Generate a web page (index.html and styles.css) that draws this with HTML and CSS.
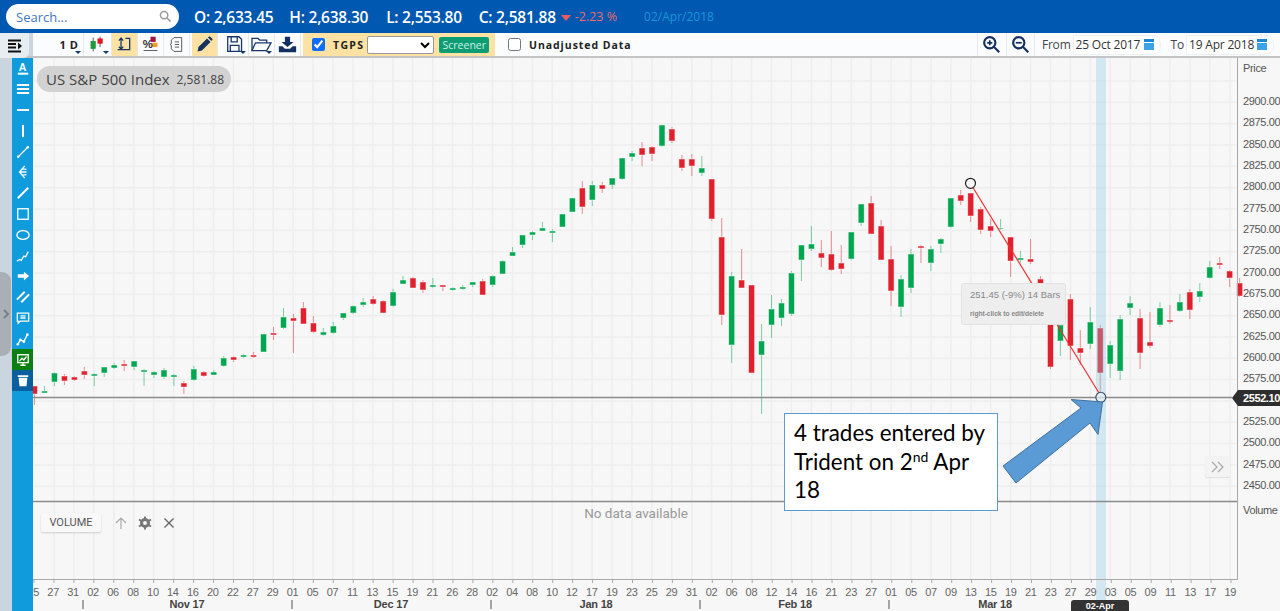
FILE: index.html
```html
<!DOCTYPE html>
<html lang="en">
  <head>
    <meta charset="UTF-8" />
    <title>US S&amp;P 500 Index</title>
    <link rel="stylesheet" href="styles.css">
  </head>
  <body>
    <header class="quote-bar">
      <div class="search">
        <span>Search...</span>
        <svg class="search-icon" viewBox="0 0 14 14"><circle cx="5.5" cy="5.5" r="4"/><path d="M8.6 8.6 12.5 12.5"/></svg>
      </div>
      <span class="ohlc ohlc-o">O: 2,633.45</span>
      <span class="ohlc ohlc-h">H: 2,638.30</span>
      <span class="ohlc ohlc-l">L: 2,553.80</span>
      <span class="ohlc ohlc-c">C: 2,581.88</span>
      <span class="change"><i class="change-arrow"></i>-2.23 %</span>
      <span class="quote-date">02/Apr/2018</span>
    </header>

    <div class="toolbar">
      <div class="tab-holder">
        <div class="tab">
          <svg class="ico-menu" viewBox="0 0 14 14"><path d="M0 1.5H13M0 5H8M0 8.5H8M0 12.5H13"/><path class="solid" d="M10 3.5 14 7 10 10.5Z"/></svg>
        </div>
      </div>
      <div class="tools">
        <div class="cell cell-period">1 D<i class="caret"></i></div>
        <div class="cell cell-chart">
          <svg class="ico" viewBox="0 0 22 22"><path class="thin" d="M6 3V19M14 2V14"/><rect x="3" y="7" width="6" height="9" fill="#1d9a3c"/><rect x="11" y="4" width="6" height="6" fill="#e0141c"/></svg>
          <i class="caret"></i>
        </div>
        <div class="cell cell-on">
          <svg class="ico" viewBox="0 0 22 22"><path class="line" d="M7 4V16M4.5 6.5 7 3.5 9.5 6.5M4.5 13.5 7 16.5 9.5 13.5"/><path class="line" d="M12 4H17V17H3"/></svg>
        </div>
        <div class="cell">
          <svg class="ico" viewBox="0 0 22 22"><rect x="11" y="2" width="6" height="6" fill="#a3143c"/><rect x="13" y="9" width="6" height="5" fill="#f59a23"/><text class="pct" x="2" y="15">%</text><path class="thin" d="M3 18H19"/></svg>
        </div>
        <div class="cell">
          <svg class="ico" viewBox="0 0 22 22"><path class="thin" d="M8 3H17V19H8L5 16V12L3.5 11 5 10V6Z"/><path class="thin" d="M9 8H14M9 11H14M9 14H14"/></svg>
        </div>
        <div class="cell cell-on cell-gap">
          <svg class="ico" viewBox="0 0 22 22"><path class="solid" d="M3 19 4 14 14 4 18 8 8 18Z"/><path class="solid" d="M15 3 17 1.5 20.5 5 19 7Z"/></svg>
        </div>
        <div class="cell cell-gap">
          <svg class="ico" viewBox="0 0 22 22"><path class="line" d="M2 2H15L18 5V19H2Z"/><path class="line" d="M6 2V8H13V2M5 19V12H15V19"/></svg>
          <i class="caret"></i>
        </div>
        <div class="cell">
          <svg class="ico ico-wide" viewBox="0 0 26 22"><path class="line" d="M2 18V4H9L11 6H19V9"/><path class="line" d="M2 18 6 9H24L19 18Z"/></svg>
          <i class="caret"></i>
        </div>
        <div class="cell">
          <svg class="ico" viewBox="0 0 22 22"><path class="solid" d="M8 2H14V8H18L11 14 4 8H8Z"/><path class="solid" d="M1 13H5L8 16H14L17 13H21V20H1Z"/></svg>
        </div>
        <div class="tgps">
          <input type="checkbox" checked />
          <b>TGPS</b>
          <select><option></option></select>
          <button class="screener">Screener</button>
        </div>
        <label class="unadjusted"><input type="checkbox" /><b>Unadjusted Data</b></label>
      </div>
      <div class="range">
        <div class="cell cell-zoom">
          <svg class="ico" viewBox="0 0 22 22"><circle class="line-thick" cx="9" cy="9" r="6.5"/><path class="line-thick" d="M14 14 20 20"/><path class="solid" d="M6 8H8V6H10V8H12V10H10V12H8V10H6Z"/></svg>
        </div>
        <div class="cell cell-zoom">
          <svg class="ico" viewBox="0 0 22 22"><circle class="line-thick" cx="9" cy="9" r="6.5"/><path class="line-thick" d="M14 14 20 20"/><path class="solid" d="M5.5 8H12.5V10H5.5Z"/></svg>
        </div>
        <span class="range-label range-from">From</span>
        <div class="date-input">25 Oct 2017<i class="cal"></i></div>
        <span class="range-label range-to">To</span>
        <div class="date-input">19 Apr 2018<i class="cal"></i></div>
      </div>
    </div>

    <div class="workspace">
      <div class="gutter"><div class="handle">
        <svg viewBox="0 0 6 10"><path d="M1 1 5 5 1 9"/></svg>
      </div></div>
      <nav class="drawbar">
        <button><svg viewBox="0 0 16 16"><text class="glyph" x="3" y="11">A</text><path class="thick" d="M2 14.5H14"/></svg></button>
        <button><svg viewBox="0 0 16 16"><path class="thick" d="M1 3.5H15M1 8H15M1 12.5H15"/></svg></button>
        <button><svg viewBox="0 0 16 16"><path class="thick" d="M1 8H15"/></svg></button>
        <button><svg viewBox="0 0 16 16"><path class="thick" d="M8 1V15"/></svg></button>
        <button><svg viewBox="0 0 16 16"><path d="M2 14 14 2"/><circle class="dot" cx="2.5" cy="13.5" r="1.4"/><circle class="dot" cx="13.5" cy="2.5" r="1.4"/></svg></button>
        <button><svg viewBox="0 0 16 16"><path d="M10 1 4 8 10 15M4 8H12M7 4.5 12 5M7 11.5 12 11"/></svg></button>
        <button><svg viewBox="0 0 16 16"><path class="thick" d="M2 14 14 2"/></svg></button>
        <button><svg viewBox="0 0 16 16"><rect x="2" y="2" width="12" height="12"/></svg></button>
        <button><svg viewBox="0 0 16 16"><ellipse cx="8" cy="8" rx="7" ry="5"/></svg></button>
        <button><svg viewBox="0 0 16 16"><path d="M1 14 4 12 6 13 9 8 11 9 14 3"/></svg></button>
        <button><svg viewBox="0 0 16 16"><path class="fill" d="M2 6H9V3L15 8 9 13V10H2Z"/></svg></button>
        <button><svg viewBox="0 0 16 16"><path class="thick" d="M1 11 10 2M6 14 15 5"/></svg></button>
        <button><svg viewBox="0 0 16 16"><path d="M1.5 2.5H14.5V11.5H5L2.5 14V11.5H1.5Z"/><path d="M5 5.5H11M5 8H11"/></svg></button>
        <button><svg viewBox="0 0 16 16"><path d="M2 14 5 9 9 11 13 3"/><circle class="dot" cx="5" cy="9" r="1.5"/><circle class="dot" cx="9" cy="11" r="1.5"/><circle class="dot" cx="13" cy="3" r="1.5"/><circle class="dot" cx="2" cy="14" r="1.5"/></svg></button>
        <button class="draw-on"><svg viewBox="0 0 16 16"><rect x="2" y="2" width="12" height="9"/><path d="M4 9 7 6 9 8 12 4M8 11V14M5 14H11"/></svg></button>
        <button class="draw-trash"><svg viewBox="0 0 16 16"><path class="fill" d="M2 2.5H14V4.5H2ZM3 5.5H13L12 15H4Z"/></svg></button>
      </nav>

      <section class="chart">
        <svg id="plot" viewBox="33 58 1247 553"></svg>

        <div class="legend"><span>US S&amp;P 500 Index</span><small>2,581.88</small></div>

        <div class="measure">
          <p class="measure-main">251.45 (-9%) 14 Bars</p>
          <p class="measure-hint">right-click to edit/delete</p>
        </div>

        <div class="price-tag">2552.10</div>
        <div class="date-tag">02-Apr</div>

        <button class="skip">
          <svg viewBox="0 0 14 12"><path d="M1 1 6 6 1 11M7 1 12 6 7 11"/></svg>
        </button>

        <div class="no-data">No data available</div>

        <div class="volume-bar">
          <button class="volume-btn">VOLUME</button>
          <svg class="vol-ico" viewBox="0 0 14 14"><path class="up" d="M7 13V2M2 7 7 2 12 7"/></svg>
          <svg class="vol-ico" viewBox="0 0 14 14"><circle class="gear" cx="7" cy="7" r="3.5"/><path class="gear-teeth" d="M7 0.5V3M7 11V13.5M1 3.5 3.2 4.8M10.8 9.2 13 10.5M1 10.5 3.2 9.2M10.8 4.8 13 3.5"/></svg>
          <svg class="vol-ico" viewBox="0 0 14 14"><path class="close" d="M2.5 2.5 11.5 11.5M11.5 2.5 2.5 11.5"/></svg>
        </div>

        <div class="callout">4 trades entered by Trident on 2<sup>nd</sup> Apr 18</div>
      </section>
    </div>

    <script src="script.js"></script>
  </body>
</html>
```

FILE: styles.css
```css
* {
  box-sizing: border-box;
}

html,
body {
  margin: 0;
  height: 611px;
  overflow: hidden;
  background: #f7f7f7;
  font-family: "Open Sans", "Liberation Sans", sans-serif;
}

button {
  font-family: inherit;
  cursor: pointer;
}

/* top blue bar */
.quote-bar {
  height: 33px;
  background: #0058b0;
  display: flex;
  align-items: center;
  padding-left: 6px;
  color: #fff;
}

.search {
  width: 173px;
  height: 25px;
  background: #fff;
  border-radius: 13px;
  display: flex;
  align-items: center;
  justify-content: space-between;
  padding: 0 7px 0 10px;
  font-size: 13px;
  color: #3f78bd;
}

.search-icon {
  width: 13px;
  height: 13px;
  fill: none;
  stroke: #9a9a9a;
  stroke-width: 1.6;
}

.ohlc {
  font-size: 15.5px;
  font-weight: 600;
  letter-spacing: -0.25px;
  white-space: nowrap;
}

.ohlc-o { margin-left: 15px; }
.ohlc-h { margin-left: 16px; }
.ohlc-l { margin-left: 18px; }
.ohlc-c { margin-left: 17px; }

.change {
  margin-left: 5px;
  font-size: 12.5px;
  color: #ee6a6e;
  white-space: nowrap;
}

.change-arrow {
  display: inline-block;
  width: 0;
  height: 0;
  margin-right: 4px;
  border-left: 5px solid transparent;
  border-right: 5px solid transparent;
  border-top: 6px solid #ee5a5e;
}

.quote-date {
  margin-left: 27px;
  font-size: 12px;
  color: #1a96d8;
}

/* toolbar */
.toolbar {
  height: 25px;
  display: flex;
  background: #fbfcfe;
  border-bottom: 2px solid #c4c4c4;
}

.tab-holder {
  width: 33px;
  background: #cbd5df;
}

.tab {
  width: 29px;
  height: 25px;
  background: #e8edf2;
  border-bottom-right-radius: 6px;
  display: flex;
  align-items: center;
  padding-left: 8px;
}

.ico-menu {
  width: 14px;
  height: 14px;
  fill: none;
  stroke: #111;
  stroke-width: 2;
}

.ico-menu .solid {
  fill: #111;
  stroke: none;
}

.tools {
  flex: 1;
  display: flex;
  padding-left: 22px;
}

.cell {
  width: 26px;
  height: 23px;
  position: relative;
  display: flex;
  align-items: center;
  justify-content: center;
  border-right: 1px solid #e8e8e8;
}

.cell-period {
  width: 29px;
  font-size: 11px;
  font-weight: 700;
  color: #222;
  letter-spacing: 0.5px;
  padding-bottom: 1px;
}

.cell-chart {
  width: 28px;
}

.cell-on {
  background: #fde2a3;
}

.cell-gap {
  margin-left: 2px;
}

.cell-gap + .cell-gap {
  margin-left: 5px;
}

.caret {
  position: absolute;
  right: 2px;
  bottom: 2px;
  width: 0;
  height: 0;
  border-left: 3px solid transparent;
  border-right: 3px solid transparent;
  border-top: 3px solid #17376b;
}

.ico {
  width: 19px;
  height: 19px;
}

.ico-wide {
  width: 23px;
}

.ico .line {
  fill: none;
  stroke: #17376b;
  stroke-width: 1.5;
}

.ico .line-thick {
  fill: none;
  stroke: #14305f;
  stroke-width: 2.5;
}

.ico .thin {
  fill: none;
  stroke: #444;
  stroke-width: 1;
}

.ico .solid {
  fill: #14305f;
}

.ico .pct {
  font: 700 13px "Liberation Sans", sans-serif;
  fill: #333;
}

.tgps {
  width: 192px;
  margin-left: 2px;
  background: #fde2a3;
  display: flex;
  align-items: center;
  padding-left: 9px;
}

.tgps input {
  width: 13px;
  height: 13px;
  margin: 0;
  accent-color: #0d6efd;
}

.tgps b {
  margin-left: 8px;
  font: 700 10.5px "Open Sans", sans-serif;
  letter-spacing: 1.3px;
  color: #222;
}

.tgps select {
  width: 67px;
  height: 18px;
  margin-left: 3px;
  background: #fff;
  border: 1px solid #999;
  border-radius: 2px;
}

.screener {
  width: 50px;
  height: 16px;
  margin-left: 5px;
  padding: 0;
  background: #0d9d75;
  border: 0;
  border-radius: 2px;
  font-size: 10.5px;
  color: #cdeee2;
}

.unadjusted {
  margin-left: 13px;
  display: flex;
  align-items: center;
}

.unadjusted input {
  width: 13px;
  height: 13px;
  margin: 0;
}

.unadjusted b {
  margin-left: 8px;
  font: 700 10.5px "Open Sans", sans-serif;
  letter-spacing: 0.95px;
  color: #222;
}

.range {
  display: flex;
  align-items: center;
}

.cell-zoom {
  width: 29px;
  border-left: 1px solid #e8e8e8;
  border-right: 0;
}

.cell-zoom + .cell-zoom {
  border-right: 1px solid #e8e8e8;
}

.range-label {
  font-size: 12px;
  letter-spacing: -0.2px;
  color: #444;
}

.range-from {
  margin-left: 7px;
}

.range-to {
  margin-left: 10px;
}

.date-input {
  height: 20px;
  width: 88px;
  margin-left: 2px;
  padding-left: 2px;
  display: flex;
  align-items: center;
  justify-content: space-between;
  font-size: 12px;
  letter-spacing: -0.2px;
  color: #333;
  background: #fff;
  border: 1px solid #eef1f4;
  border-radius: 0 9px 9px 0;
}

.date-input:last-child {
  margin-right: 6px;
}

.cal {
  width: 10px;
  height: 11px;
  margin-right: 6px;
  background: linear-gradient(#1e88d8 3px, #fff 3px, #fff 4px, #3aa4e6 4px);
}

/* main area */
.workspace {
  display: flex;
  height: 553px;
}

.gutter {
  width: 12px;
  background: #cbd5df;
  position: relative;
}

.handle {
  position: absolute;
  left: 0;
  top: 214px;
  width: 11px;
  height: 84px;
  background: #a9afb5;
  border-radius: 0 9px 9px 0;
  display: flex;
  align-items: center;
  justify-content: center;
}

.handle svg {
  width: 6px;
  height: 10px;
  fill: none;
  stroke: #79818a;
  stroke-width: 2;
}

.drawbar {
  width: 21px;
  background: #0f9bdc;
  display: flex;
  flex-direction: column;
}

.drawbar button {
  height: 20.8px;
  padding: 0;
  border: 0;
  background: none;
  display: flex;
  align-items: center;
  justify-content: center;
}

.drawbar svg {
  width: 14px;
  height: 14px;
  fill: none;
  stroke: #fff;
  stroke-width: 1.5;
}

.drawbar .thick {
  stroke-width: 2.3;
}

.drawbar .dot,
.drawbar .fill {
  fill: #fff;
  stroke: none;
}

.drawbar .glyph {
  font: 700 12px "Liberation Sans", sans-serif;
  fill: #fff;
  stroke: none;
}

.draw-on {
  background: #0b7f0f !important;
}

.draw-trash {
  background: #0a5f9e !important;
}

.chart {
  flex: 1;
  position: relative;
  overflow: hidden;
  background: #f7f7f7;
}

#plot {
  display: block;
  width: 1247px;
  height: 553px;
}

.grid-line {
  stroke: #eeeeee;
  stroke-width: 1.5;
}

.axis-line {
  stroke: #a8a8a8;
  stroke-width: 1;
}

.rule {
  stroke: #8a8a8a;
  stroke-width: 1.5;
}

.band {
  fill: #8cc8e6;
  fill-opacity: 0.34;
}

.trend {
  stroke: #f03030;
  stroke-width: 1.2;
}

.handle-top {
  fill: #f7f7f7;
  stroke: #222;
  stroke-width: 1.2;
}

.handle-end {
  fill: #e8f2f6;
  fill-opacity: 0.7;
  stroke: #34495e;
  stroke-width: 1.1;
}

.wick-up { stroke: #00a650; stroke-opacity: 0.5; }
.wick-down { stroke: #e0202c; stroke-opacity: 0.5; }
.body-up { fill: #00a650; stroke: #fff; stroke-opacity: 0.6; stroke-width: 0.8; }
.body-down { fill: #e0202c; stroke: #fff; stroke-opacity: 0.6; stroke-width: 0.8; }

.axis-text {
  font: 11px "Liberation Sans", sans-serif;
  fill: #555;
  letter-spacing: -0.35px;
}

.date-text {
  font: 11px "Liberation Sans", sans-serif;
  fill: #666;
  text-anchor: middle;
  letter-spacing: -0.3px;
}

.month-text {
  font: 700 11px "Liberation Sans", sans-serif;
  fill: #444;
  text-anchor: middle;
  letter-spacing: -0.2px;
}

.arrow-shape {
  fill: #5b9bd5;
  stroke: #41719c;
  stroke-width: 1;
}

.legend {
  position: absolute;
  left: 4px;
  top: 8px;
  width: 194px;
  height: 26px;
  background: #d2d2d2;
  border-radius: 13px;
  display: flex;
  align-items: center;
  padding-left: 9px;
  color: #444;
  font-size: 15px;
  white-space: nowrap;
}

.legend small {
  margin-left: 7px;
  font-size: 12px;
}

.measure {
  position: absolute;
  left: 928px;
  top: 225px;
  width: 105px;
  height: 42px;
  background: #eee;
  border: 1px solid #e2e2e2;
  border-radius: 3px;
  padding: 5px 0 0 8px;
  font-family: "Liberation Sans", sans-serif;
  color: #888;
  white-space: nowrap;
}

.measure p {
  margin: 0;
}

.measure-main {
  font-size: 9.5px;
}

.measure .measure-hint {
  margin-top: 10px;
  font-size: 6.6px;
  font-weight: 700;
}

.price-tag {
  position: absolute;
  left: 1205px;
  top: 332px;
  width: 42px;
  height: 16px;
  background: #2e2e2e;
  color: #fff;
  font: 700 11px/16px "Liberation Sans", sans-serif;
  letter-spacing: -0.4px;
  padding-left: 5px;
}

.price-tag::before {
  content: "";
  position: absolute;
  left: -6px;
  top: 0;
  border-top: 8px solid transparent;
  border-bottom: 8px solid transparent;
  border-right: 6px solid #2e2e2e;
}

.date-tag {
  position: absolute;
  left: 1038px;
  top: 542px;
  width: 58px;
  height: 11px;
  background: #333;
  border-radius: 3px 3px 0 0;
  color: #fff;
  font: 700 9px/12px "Liberation Sans", sans-serif;
  text-align: center;
}

.skip {
  position: absolute;
  left: 1172px;
  top: 398px;
  width: 25px;
  height: 21px;
  padding: 0;
  background: #f3f3f3;
  border: 0;
  border-radius: 2px;
  box-shadow: 0 1px 1px #ddd;
  display: flex;
  align-items: center;
  justify-content: center;
}

.skip svg {
  width: 14px;
  height: 12px;
  fill: none;
  stroke: #aaa;
  stroke-width: 1.2;
}

.no-data {
  position: absolute;
  left: 503px;
  top: 447px;
  width: 200px;
  text-align: center;
  font: 13.5px Roboto, sans-serif;
  color: #999;
}

.volume-bar {
  position: absolute;
  left: 8px;
  top: 455px;
  display: flex;
  align-items: center;
  gap: 9px;
}

.volume-btn {
  width: 60px;
  height: 19px;
  padding: 0;
  margin-right: 4px;
  background: #f8f8f8;
  border: 0;
  border-radius: 2px;
  box-shadow: 0 1px 2px #ccc;
  font: 11px Roboto, sans-serif;
  color: #555;
}

.vol-ico {
  width: 14px;
  height: 14px;
  margin-right: 1px;
  fill: none;
}

.vol-ico .up {
  stroke: #aaa;
  stroke-width: 1.2;
}

.vol-ico .gear {
  stroke: #777;
  stroke-width: 3;
}

.vol-ico .gear-teeth {
  stroke: #777;
  stroke-width: 2;
}

.vol-ico .close {
  stroke: #666;
  stroke-width: 1.4;
}

.callout {
  position: absolute;
  left: 751px;
  top: 355px;
  width: 214px;
  height: 98px;
  background: #fff;
  border: 1px solid #5b9bd5;
  padding: 5px 9px 0 9px;
  font: 22.4px/28.5px Lato, sans-serif;
  color: #000;
}

.callout sup {
  font-size: 14px;
  line-height: 0;
}
```

FILE: script.js
```js
// each candle: direction, wick top, body top, body bottom, wick bottom (page y)
const candles = [
  ["d",386,386,394,405],["u",386,391,393,393],["u",372,373,382,386],["d",374,376,381,385],
  ["d",376,377,380,381],["d",367,371,375,379],["u",373,374,376,386],["u",367,367,373,377],
  ["u",363,365,368,369],["d",360,364,366,371],["u",361,361,367,370],["u",369,370,372,386],
  ["u",371,372,375,378],["u",368,370,377,379],["u",374,375,377,386],["d",381,383,387,394],
  ["u",366,369,380,381],["d",371,372,376,377],["u",370,372,375,375],["u",356,358,366,367],
  ["d",356,357,360,362],["u",354,355,357,358],["d",352,355,357,358],["u",334,334,352,352],
  ["d",327,333,335,340],["u",308,317,328,329],["d",314,318,321,353],["d",302,308,324,324],
  ["d",316,323,332,333],["u",328,332,335,336],["u",322,326,333,334],["u",313,313,318,320],
  ["u",305,306,313,314],["u",298,302,305,307],["d",296,299,304,305],["d",300,301,313,313],
  ["u",289,292,306,307],["u",276,280,284,284],["d",277,278,288,288],["d",280,282,290,293],
  ["u",278,285,287,288],["d",285,285,287,291],["u",287,288,290,291],["u",285,287,289,290],
  ["u",282,282,285,287],["d",279,281,295,295],["u",275,276,285,287],["u",260,261,274,274],
  ["u",247,252,256,256],["u",235,235,245,248],["u",231,232,235,240],["u",222,228,231,231],
  ["u",229,231,233,242],["u",214,214,227,227],["u",198,198,212,212],["d",181,188,207,214],
  ["u",181,185,200,206],["d",182,185,189,193],["u",178,178,185,189],["u",158,158,179,180],
  ["u",151,153,157,161],["d",142,148,155,166],["d",146,147,154,161],["u",125,125,146,147],
  ["d",127,129,141,143],["d",155,159,168,171],["d",154,159,166,176],["u",156,168,173,176],
  ["d",179,179,219,221],["d",218,237,315,325],["u",272,276,345,363],["d",249,280,288,288],
  ["d",285,285,373,373],["u",324,341,355,414],["u",295,309,325,338],["u",299,303,318,326],
  ["u",271,273,314,316],["u",245,245,260,281],["u",226,244,249,251],["d",240,253,258,267],
  ["d",231,254,270,271],["d",245,263,269,274],["u",232,232,259,260],["u",204,204,223,226],
  ["d",196,203,234,234],["d",220,226,260,260],["d",246,259,291,306],["u",275,279,307,317],
  ["u",249,254,288,293],["d",245,246,248,263],["u",246,249,263,271],["u",238,239,244,253],
  ["u",198,198,227,228],["d",190,195,201,205],["d",193,193,216,222],["d",207,209,230,234],
  ["d",219,226,231,237],["u",219,228,229,230],["d",237,237,261,277],["u",251,258,260,263],
  ["d",239,259,262,264],["d",276,279,290,292],["d",300,316,367,369],["u",310,325,341,356],
  ["d",294,299,346,360],["d",330,348,353,365],["u",307,322,344,349],["d",325,328,373,392],
  ["u",341,345,364,378],["u",315,319,371,380],["u",296,303,308,315],["d",309,318,353,369],
  ["d",312,342,346,348],["u",302,308,325,327],["d",305,320,322,324],["u",294,302,311,312],
  ["d",289,292,310,319],["u",283,291,297,302],["u",261,267,278,279],["d",257,263,265,269],
  ["d",270,271,278,287],["d",278,283,296,297]
];

const dates = ["25","27","31","02","06","08","10","14","16","20","22","27","29","01","05","07",
  "11","13","15","19","21","26","28","02","04","08","10","12","17","19","23","25","29","31","02",
  "06","08","12","14","16","21","23","27","01","05","07","09","13","15","19","21","23","27","29",
  "03","05","09","11","13","17","19"];

const months = [["Nov 17", 187], ["Dec 17", 391], ["Jan 18", 596], ["Feb 18", 795], ["Mar 18", 995]];
const monthTicks = [83, 292, 491, 700, 889];

const plot = document.querySelector("#plot");
const ns = "http://www.w3.org/2000/svg";

function add(tag, attrs, text) {
  const el = document.createElementNS(ns, tag);
  Object.keys(attrs).forEach((key) => el.setAttribute(key, attrs[key]));
  if (text) el.textContent = text;
  plot.appendChild(el);
  return el;
}

// grid
for (let y = 81; y < 500; y += 21.33) {
  add("line", { class: "grid-line", x1: 33, x2: 1237, y1: y, y2: y });
}
for (let x = 54; x < 1237; x += 19.93) {
  add("line", { class: "grid-line", x1: x, x2: x, y1: 58, y2: 579 });
}

// candles
candles.forEach((c, i) => {
  const x = 34.5 + 9.96 * i;
  const up = c[0] == "u";
  add("line", { class: up ? "wick-up" : "wick-down", x1: x, x2: x, y1: c[1], y2: c[4] });
  add("rect", { class: up ? "body-up" : "body-down", x: x - 3, y: c[2], width: 6, height: c[3] - c[2] });
});

// selected day and the lines on top of it
add("rect", { class: "band", x: 1096, y: 58, width: 10, height: 553 });
add("line", { class: "rule", x1: 33, x2: 1232, y1: 397.5, y2: 397.5 });
add("line", { class: "rule", x1: 33, x2: 1238, y1: 501.5, y2: 501.5 });
add("line", { class: "trend", x1: 972, y1: 186, x2: 1099, y2: 393 });
add("circle", { class: "handle-top", cx: 970.5, cy: 183.3, r: 5 });
add("circle", { class: "handle-end", cx: 1100.8, cy: 397.3, r: 5 });
add("polygon", { class: "arrow-shape", points: "1003,466 1081,408 1071,399.5 1102.5,402 1098,434.5 1090,423 1016,483" });

// price axis, the 2550 label sits under the price tag so it is left out
add("line", { class: "axis-line", x1: 1237.5, x2: 1237.5, y1: 58, y2: 579 });
add("text", { class: "axis-text", x: 1243, y: 72 }, "Price");
for (let p = 2900, y = 105; p >= 2450; p -= 25, y += 21.33) {
  if (p != 2550) add("text", { class: "axis-text", x: 1243, y: y }, p + ".00");
}
add("text", { class: "axis-text", x: 1243, y: 514 }, "Volume");

// date axis
add("line", { class: "axis-line", x1: 33, x2: 1238, y1: 579.5, y2: 579.5 });
dates.forEach((d, i) => {
  const x = 33.2 + 19.95 * i;
  add("line", { class: "axis-line", x1: x + 0.8, x2: x + 0.8, y1: 579, y2: 583 });
  add("text", { class: "date-text", x: x, y: 596 }, d);
});
monthTicks.forEach((x) => add("line", { class: "rule", x1: x, x2: x, y1: 600, y2: 609 }));
months.forEach((m) => add("text", { class: "month-text", x: m[1], y: 608 }, m[0]));
```
